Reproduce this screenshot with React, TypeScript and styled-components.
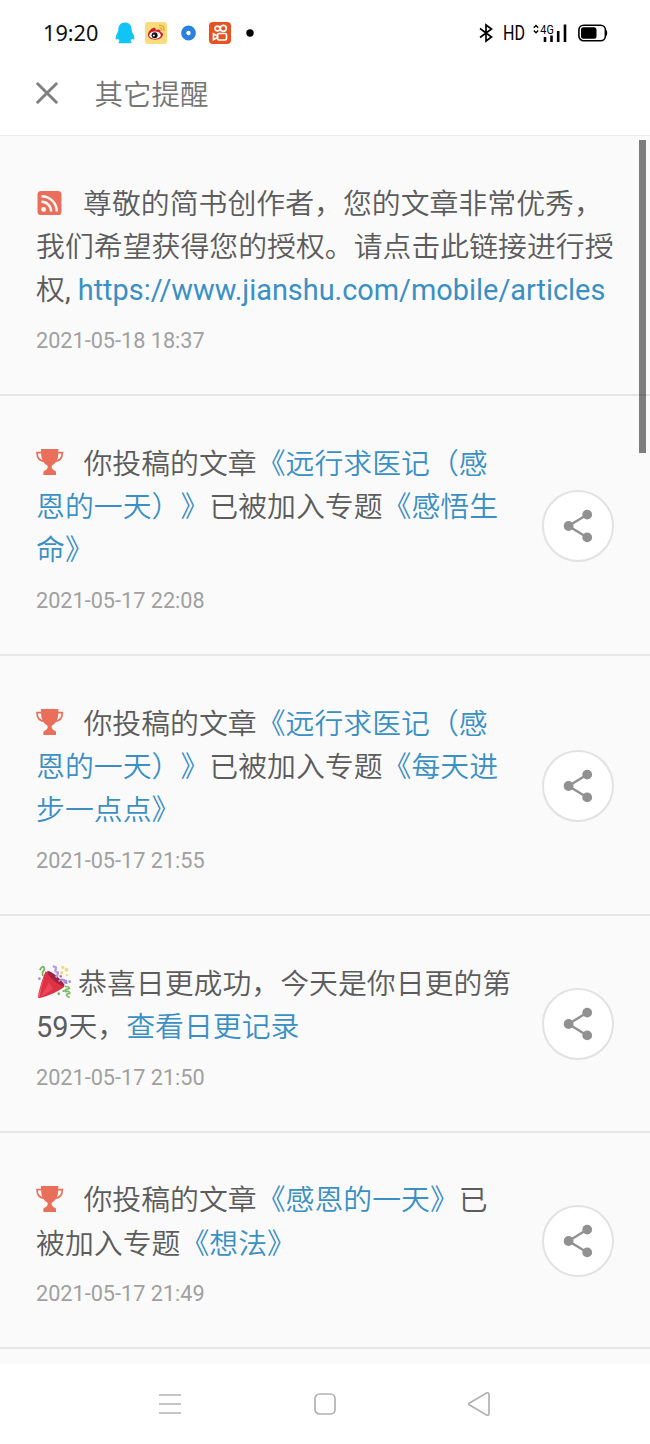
import React from "react";
import styled, { createGlobalStyle } from "styled-components";

const GlobalStyle = createGlobalStyle`
  * { box-sizing: border-box; }
  body {
    margin: 0;
    background: #fff;
    font-family: Roboto, "Noto Sans CJK SC", sans-serif;
    text-spacing-trim: space-all;
  }
`;

const Screen = styled.div`
  position: relative;
  display: flex;
  flex-direction: column;
  width: 650px;
  height: 1444px;
  overflow: hidden;
  background: #fff;
`;

const StatusBar = styled.header`
  display: flex;
  align-items: center;
  justify-content: space-between;
  height: 66px;
  padding: 0 41px 0 43px;
`;

const StatusGroup = styled.div`
  display: flex;
  align-items: center;
`;

const Clock = styled.span`
  width: 72px;
  font: 400 21.7px/28px "Noto Sans", sans-serif;
  color: #111;
`;

const StatusIcon = styled.svg<{ $before?: number }>`
  display: block;
  overflow: visible;
  margin-left: ${(p) => p.$before ?? 0}px;
`;

const TitleBar = styled.div`
  display: flex;
  align-items: center;
  height: 70px;
  padding: 0 36px 15px;
  border-bottom: 1px solid #ececec;
`;

const CloseIcon = styled.svg`
  display: block;
  margin-right: 36.5px;
`;

const Title = styled.h1`
  margin: 5px 0 0;
  font-size: 28.5px;
  font-weight: 350;
  line-height: 40px;
  color: #757575;
`;

const Feed = styled.main`
  height: 1228px;
  overflow: hidden;
  background: #fafafa;
`;

const Notice = styled.article<{ $lines: number }>`
  display: flex;
  align-items: center;
  justify-content: space-between;
  height: ${(p) => (p.$lines === 3 ? 260 : 216.6)}px;
  padding: 0 36.5px 0 36px;
  border-bottom: 2px solid #e6e6e6;
`;

const NoticeBody = styled.div`
  padding-top: 10px;
`;

const Line = styled.div`
  display: flex;
  align-items: center;
  height: 43.33px;
  font-size: 28.88px;
  font-weight: 350;
  line-height: 43.33px;
  color: #5c5c5c;
  white-space: pre;
`;

const Run = styled.span<{ $latin?: boolean }>`
  font-weight: ${(p) => (p.$latin ? 400 : 350)};
`;

const Link = styled.a<{ $latin?: boolean }>`
  font-weight: ${(p) => (p.$latin ? 400 : 350)};
  color: #3a90c4;
`;

const Stamp = styled.time`
  display: block;
  margin-top: 12.4px;
  font-size: 21.67px;
  line-height: 32px;
  color: #a0a0a0;
`;

const LeadIcon = styled.svg<{ $after: number; $raise: number }>`
  display: block;
  flex: none;
  overflow: visible;
  margin-right: ${(p) => p.$after}px;
  margin-bottom: ${(p) => p.$raise}px;
`;

const ShareButton = styled.button`
  display: flex;
  align-items: center;
  justify-content: center;
  width: 72px;
  height: 72px;
  flex: none;
  margin-top: 1.5px;
  padding: 0;
  border: 2px solid #e2e2e2;
  border-radius: 50%;
  background: #fff;
`;

const ScrollThumb = styled.div`
  position: absolute;
  top: 140px;
  right: 4px;
  width: 7px;
  height: 313px;
  background: rgba(0, 0, 0, 0.5);
`;

const NavBar = styled.nav`
  display: flex;
  justify-content: space-between;
  align-items: center;
  height: 80px;
  padding: 0 159px 0 158px;
`;

const Trophy = () => (
  <LeadIcon $after={20} $raise={5} width="27.4" height="26" viewBox="0 0 82 78">
    <path
      d="M16 11H3C3 26 10 36 27 37M66 11H79C79 26 72 36 55 37"
      fill="none"
      stroke="#e96f5b"
      strokeWidth="5"
    />
    <path
      fill="#e96f5b"
      d="M15 0H67V8C67 30 61 41 50 48C46 51 46 55 48 58C50 62 54 65 58 66Q60 67 60 70V78H22V70Q22 67 24 66C28 65 32 62 34 58C36 55 36 51 32 48C21 41 15 30 15 8Z"
    />
  </LeadIcon>
);

const FeedMark = () => (
  <LeadIcon $after={21} $raise={3} width="26" height="24" viewBox="-1.500 0 26 24">
    <rect width="24" height="24" rx="3.600" fill="#e96f5b" />
    <circle cx="6.100" cy="18.400" r="2.400" fill="#fafafa" />
    <path
      d="M4 10.800A9.700 9.700 0 0 1 13.700 20.500M4 5.200A15.300 15.300 0 0 1 19.300 20.500"
      fill="none"
      stroke="#fafafa"
      strokeWidth="2.400"
    />
  </LeadIcon>
);

const Popper = () => (
  <LeadIcon $after={7.5} $raise={4} width="34.5" height="34" viewBox="-2 0 103 102">
    <path d="M27 19L83 65C73 74 35 94 8 99Q2 100 4 92C8 72 18 36 27 19Z" fill="#df3044" />
    <path d="M24 31L14 69L9 96L4 96L14 58Z" fill="#f1606a" />
    <path d="M37 52L49 72L22 91L12 93Z" fill="#ee5261" opacity=".7" />
    <ellipse cx="57" cy="41" rx="34" ry="8" transform="rotate(41 57 41)" fill="#a3223f" />
    <path d="M9 15Q17 0 22 8Q25 14 19 19Q15 24 19 33" fill="none" stroke="#70b45b" strokeWidth="5" />
    <path d="M48 5Q60 3 57 12Q53 22 63 22Q64 31 57 37" fill="none" stroke="#b59ae0" strokeWidth="7" />
    <path d="M66 50Q71 40 82 45Q81 56 92 54" fill="none" stroke="#a98ad7" strokeWidth="6" />
    <path d="M84 65Q96 63 98 70Q80 75 86 80Q99 77 99 85Q87 87 90 92L99 98" fill="none" stroke="#7abd63" strokeWidth="5" />
    <g fill="#f1dc80">
      <circle cx="78" cy="7" r="5" />
      <circle cx="89" cy="14" r="6" />
      <circle cx="75" cy="23" r="5" />
      <circle cx="91" cy="30" r="4" />
    </g>
    <g fill="#a78bd7">
      <circle cx="8" cy="41" r="4" />
      <circle cx="88" cy="48" r="4" />
      <circle cx="99" cy="50" r="4" />
    </g>
    <g fill="#73b45c">
      <circle cx="66" cy="86" r="4" />
      <circle cx="80" cy="78" r="3" />
    </g>
    <circle cx="72" cy="34" r="4" fill="#e2649a" />
  </LeadIcon>
);

const Share = () => (
  <ShareButton aria-label="分享">
    <svg width="30" height="34" viewBox="0 0 30 34">
      <path d="M24.3 5.5L5.5 17L24.3 28.5" fill="none" stroke="#919191" strokeWidth="2.4" />
      <g fill="#919191">
        <circle cx="24.2" cy="5.6" r="4.900" />
        <circle cx="5.6" cy="17" r="4.900" />
        <circle cx="24.2" cy="28.4" r="4.900" />
      </g>
    </svg>
  </ShareButton>
);

type Part = { text: string; link?: boolean; latin?: boolean };
type Item = { icon: "feed" | "trophy" | "popper"; lines: Part[][]; time: string; share: boolean };

const items: Item[] = [
  {
    icon: "feed",
    lines: [
      [{ text: "尊敬的简书创作者，您的文章非常优秀，" }],
      [{ text: "我们希望获得您的授权。请点击此链接进行授" }],
      [
        { text: "权" },
        { text: ", ", latin: true },
        { text: "https://www.jianshu.com/mobile/articles", link: true, latin: true },
      ],
    ],
    time: "2021-05-18 18:37",
    share: false,
  },
  {
    icon: "trophy",
    lines: [
      [{ text: "你投稿的文章" }, { text: "《远行求医记（感", link: true }],
      [{ text: "恩的一天）》", link: true }, { text: "已被加入专题" }, { text: "《感悟生", link: true }],
      [{ text: "命》", link: true }],
    ],
    time: "2021-05-17 22:08",
    share: true,
  },
  {
    icon: "trophy",
    lines: [
      [{ text: "你投稿的文章" }, { text: "《远行求医记（感", link: true }],
      [{ text: "恩的一天）》", link: true }, { text: "已被加入专题" }, { text: "《每天进", link: true }],
      [{ text: "步一点点》", link: true }],
    ],
    time: "2021-05-17 21:55",
    share: true,
  },
  {
    icon: "popper",
    lines: [
      [{ text: "恭喜日更成功，今天是你日更的第" }],
      [{ text: "59", latin: true }, { text: "天，" }, { text: "查看日更记录", link: true }],
    ],
    time: "2021-05-17 21:50",
    share: true,
  },
  {
    icon: "trophy",
    lines: [
      [{ text: "你投稿的文章" }, { text: "《感恩的一天》", link: true }, { text: "已" }],
      [{ text: "被加入专题" }, { text: "《想法》", link: true }],
    ],
    time: "2021-05-17 21:49",
    share: true,
  },
];

const icons = { feed: FeedMark, trophy: Trophy, popper: Popper };

export default function App() {
  return (
    <Screen>
      <GlobalStyle />
      <StatusBar>
        <StatusGroup>
          <Clock>19:20</Clock>
          <StatusIcon width="20" height="22" viewBox="0 0 20 22">
            <path
              fill="#10c5f5"
              d="M10 .5C5.200 .5 3.300 4 3.300 8C3.300 10 .6 13 .6 16C.6 18 1.800 18 3 16.500C3.400 17.800 4 18.400 4.700 19C2 20.500 4 21.500 7 21.300H13C16 21.500 18 20.500 15.300 19C16 18.400 16.600 17.800 17 16.500C18.200 18 19.400 18 19.400 16C19.400 13 16.700 10 16.700 8C16.700 4 14.800 .5 10 .5Z"
            />
          </StatusIcon>
          <StatusIcon $before={10} width="22" height="22" viewBox="0 0 22 22">
            <rect width="22" height="22" rx="3" fill="#f9dc7b" />
            <path d="M3 13C3 9 8 5 10 6C11 6.500 10.500 8 11 8C13 7 16 7 15.500 10C19 11 18.500 14 16 16C12 19 3 18 3 13Z" fill="#cf202b" />
            <ellipse cx="10" cy="13.200" rx="5.700" ry="3.700" fill="#fff" />
            <circle cx="9.600" cy="13.200" r="3" fill="#111" />
            <circle cx="8.800" cy="13.600" r="1" fill="#fff" />
            <path d="M14 3.500C18 2.500 20 6 18.700 9M14.500 6C16.500 5.700 17.200 7 16.700 8.500" stroke="#efa238" strokeWidth="1.300" fill="none" />
          </StatusIcon>
          <StatusIcon $before={13.5} width="15" height="16" viewBox="0 0 15 16">
            <circle cx="7.500" cy="8" r="4.800" fill="#fff" stroke="#2a82df" strokeWidth="5.200" />
          </StatusIcon>
          <StatusIcon $before={13} width="22" height="22" viewBox="0 0 22 22">
            <rect width="22" height="22" rx="4" fill="#e85220" />
            <g fill="none" stroke="#fff" strokeWidth="1.700">
              <circle cx="8.500" cy="6.500" r="2.400" />
              <circle cx="14.300" cy="6.300" r="3" />
              <rect x="8.500" y="11.500" width="9" height="6.500" rx="1.500" />
              <path d="M8.500 14L4.500 12V17.500L8.500 15.500Z" />
            </g>
          </StatusIcon>
          <StatusIcon $before={15} width="8" height="8" viewBox="0 0 8 8">
            <circle cx="4" cy="4" r="3.700" fill="#000" />
          </StatusIcon>
        </StatusGroup>
        <StatusGroup>
          <StatusIcon width="14" height="18" viewBox="0 0 14 18">
            <path d="M1 4.500L12.500 13L7 17V1L12.500 5L1 13.500" fill="none" stroke="#000" strokeWidth="1.700" />
          </StatusIcon>
          <StatusIcon $before={9} width="24" height="24" viewBox="0 0 24 24">
            <text x="1" y="19" fontFamily="Roboto, sans-serif" fontSize="20" textLength="22" lengthAdjust="spacingAndGlyphs" fill="#000">
              HD
            </text>
          </StatusIcon>
          <StatusIcon $before={7} width="34" height="18" viewBox="0 0 34 18">
            <path d="M.8 3.700L3 1.500L5.200 3.700M.8 6.500L3 8.700L5.200 6.500" fill="none" stroke="#000" strokeWidth="1.400" />
            <text x="7.300" y="9.500" fontFamily="Roboto, sans-serif" fontSize="12.500" textLength="13.500" lengthAdjust="spacingAndGlyphs" fill="#000">
              4G
            </text>
            <path d="M12 18V13M18.500 18V11.500M25.200 18V7M32 18V.5" stroke="#000" strokeWidth="2.600" />
          </StatusIcon>
          <StatusIcon $before={11} width="31" height="18" viewBox="0 0 31 18">
            <rect x=".9" y="1.200" width="26.500" height="15.600" rx="4.800" fill="none" stroke="#000" strokeWidth="1.600" />
            <rect x="3" y="3.300" width="15.500" height="11.400" rx="2.500" fill="#000" />
            <path d="M28 5.500Q30.500 9 28 12.500Z" fill="#000" />
          </StatusIcon>
        </StatusGroup>
      </StatusBar>
      <TitleBar>
        <CloseIcon width="22" height="22" viewBox="0 0 22 22">
          <path d="M1.700 1.700L20.300 20.300M20.300 1.700L1.700 20.300" stroke="#808080" strokeWidth="2.900" strokeLinecap="round" />
        </CloseIcon>
        <Title>其它提醒</Title>
      </TitleBar>
      <Feed>
        {items.map((item, n) => {
          const Icon = icons[item.icon];
          return (
            <Notice key={n} $lines={item.lines.length}>
              <NoticeBody>
                {item.lines.map((line, i) => (
                  <Line key={i}>
                    {i === 0 && <Icon />}
                    {line.map((part, k) => {
                      const Piece = part.link ? Link : Run;
                      return (
                        <Piece key={k} $latin={part.latin}>
                          {part.text}
                        </Piece>
                      );
                    })}
                  </Line>
                ))}
                <Stamp>{item.time}</Stamp>
              </NoticeBody>
              {item.share && <Share />}
            </Notice>
          );
        })}
      </Feed>
      <NavBar>
        <svg width="24" height="24" viewBox="0 0 24 24">
          <path d="M1 3H23M1 12H23M1 21H23" stroke="#b2b2b2" strokeWidth="1.600" />
        </svg>
        <svg width="24" height="24" viewBox="0 0 24 24">
          <rect x="2" y="2" width="20" height="20" rx="4.500" fill="none" stroke="#b2b2b2" strokeWidth="1.700" />
        </svg>
        <svg width="24" height="26" viewBox="0 0 24 26">
          <path d="M2.500 12Q1 13 2.500 14L19.500 23.900Q22 25 22 22.500V3.500Q22 1 19.500 2.100Z" fill="none" stroke="#b2b2b2" strokeWidth="1.700" />
        </svg>
      </NavBar>
      <ScrollThumb />
    </Screen>
  );
}
